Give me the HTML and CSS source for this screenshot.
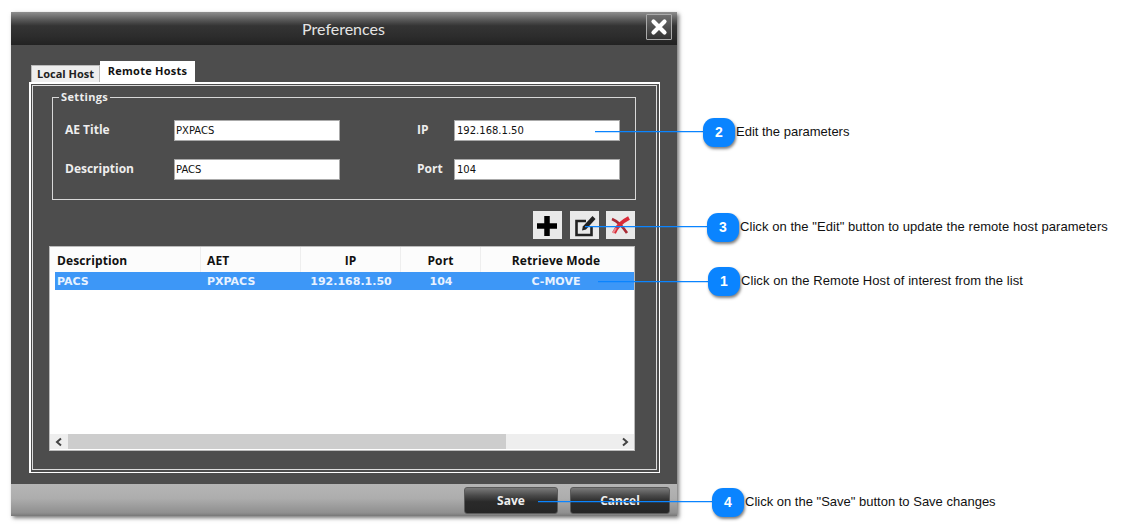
FILE: index.html
```html
<!DOCTYPE html>
<html lang="en">
<head>
<meta charset="utf-8">
<title>Preferences</title>
<link rel="stylesheet" href="styles.css">
</head>
<body>
<main class="dialog">
  <header class="titlebar">
    <h1 class="title">Preferences</h1>
    <button class="close" aria-label="Close">
      <svg width="20" height="20" viewBox="0 0 20 20"><path d="M4.5 4.5 L15.5 15.5 M15.5 4.5 L4.5 15.5" stroke="#fff" stroke-width="4.2" stroke-linecap="round"/></svg>
    </button>
  </header>
  <section class="body">
    <nav class="tabs">
      <div class="tab">Local Host</div>
      <div class="tab tab-active">Remote Hosts</div>
    </nav>
    <div class="panel">
      <fieldset class="settings">
        <legend class="legend">Settings</legend>
        <div class="form">
          <label class="lbl">AE Title</label><div class="field field-l">PXPACS</div>
          <label class="lbl lbl-r">IP</label><div class="field">192.168.1.50</div>
          <label class="lbl">Description</label><div class="field field-l">PACS</div>
          <label class="lbl lbl-r">Port</label><div class="field">104</div>
        </div>
      </fieldset>
      <div class="toolbar">
        <button class="tool" aria-label="Add">
          <svg width="25" height="25" viewBox="0 0 25 25"><path d="M12 3 V23 M2 13 H22" stroke="#000" stroke-width="5.5"/></svg>
        </button>
        <button class="tool" aria-label="Edit">
          <svg width="25" height="25" viewBox="0 0 25 25"><path d="M14 8 H4.5 V22 H19.5 V13" fill="none" stroke="#222" stroke-width="2.6"/><path d="M10 17.5 L10.8 13.5 L20.5 3 L23.5 6 L14 16.5 Z" fill="#222"/></svg>
        </button>
        <button class="tool" aria-label="Delete">
          <svg width="25" height="25" viewBox="0 0 25 25"><path d="M4 6 C9 8 15 14 19 20" fill="none" stroke="#a92a35" stroke-width="2.6"/><path d="M21 5 C15 8 9 13 6 20" fill="none" stroke="#d92a38" stroke-width="4"/><path d="M8 15 L5 20" stroke="#e88a90" stroke-width="2"/></svg>
        </button>
      </div>
      <div class="list">
        <div class="list-head row">
          <div class="c c1">Description</div><div class="c c2">AET</div><div class="c c3">IP</div><div class="c c4">Port</div><div class="c c5">Retrieve Mode</div>
        </div>
        <div class="list-sel row">
          <div class="c c1">PACS</div><div class="c c2">PXPACS</div><div class="c c3">192.168.1.50</div><div class="c c4">104</div><div class="c c5">C-MOVE</div>
        </div>
        <div class="list-fill"></div>
        <div class="hscroll">
          <div class="arrow"><svg width="10" height="10" viewBox="0 0 10 10"><path d="M7 1.5 L3 5 L7 8.5" fill="none" stroke="#444" stroke-width="2"/></svg></div>
          <div class="thumb"></div>
          <div class="track"></div>
          <div class="arrow"><svg width="10" height="10" viewBox="0 0 10 10"><path d="M3 1.5 L7 5 L3 8.5" fill="none" stroke="#444" stroke-width="2"/></svg></div>
        </div>
      </div>
    </div>
  </section>
  <footer class="footer">
    <button class="fbtn fbtn-save">Save</button>
    <button class="fbtn fbtn-cancel">Cancel</button>
  </footer>
</main>

<div class="note note2"><span class="line"></span><span class="badge">2</span><span class="ntext">Edit the parameters</span></div>
<div class="note note3"><span class="line"></span><span class="badge">3</span><span class="ntext">Click on the "Edit" button to update the remote host parameters</span></div>
<div class="note note1"><span class="line"></span><span class="badge">1</span><span class="ntext">Click on the Remote Host of interest from the list</span></div>
<div class="note note4"><span class="line"></span><span class="badge">4</span><span class="ntext">Click on the "Save" button to Save changes</span></div>
</body>
</html>
```
FILE: styles.css
```css
* { box-sizing: border-box; }
html, body { margin: 0; padding: 0; background: #fff; }
body { width: 1132px; height: 531px; overflow: hidden; position: relative; font-family: "Open Sans", sans-serif; }

.dialog {
  width: 666px; height: 504px; margin: 12px 0 0 11px;
  display: flex; flex-direction: column;
  background: #4d4d4d;
  box-shadow: 2px 2px 4px rgba(0,0,0,.55);
}
.titlebar {
  height: 33px; flex: none; position: relative;
  display: flex; align-items: center; justify-content: center;
  background: linear-gradient(#8e8e8e 0, #5c5c5c 22%, #343434 42%, #2c2c2c 75%, #222 100%);
}
.title { margin: 0 1px 0 0; font: 400 16px "Lato", sans-serif; color: #e4e4e4; }
.close {
  position: absolute; right: 5px; top: 2px; width: 26px; height: 26px; padding: 0;
  display: flex; align-items: center; justify-content: center;
  background: linear-gradient(#6e6e6e, #333); border: 1px solid #aaa; border-radius: 1px;
}

.body { flex: 1; padding: 16px 17px 11px 18px; display: flex; flex-direction: column; min-height: 0; }
.tabs { height: 21px; flex: none; display: flex; align-items: flex-end; padding-left: 2px; }
.tab {
  height: 17px; width: 69px; background: #eee; color: #222;
  font: 700 11px/15px "Open Sans", sans-serif; text-align: center;
  border: 1px solid #bbb; border-bottom: 0;
}
.tab-active { height: 21px; width: 95px; background: #fff; border: 0; color: #111; line-height: 19px; letter-spacing: .25px; }

.panel {
  flex: 1; min-height: 0; padding: 13px 21px 21px 19px;
  border: 2px solid #fff; border-right-width: 1px; border-bottom-width: 1px;
  outline: 1px solid #ddd; outline-offset: -4px;
  display: flex; flex-direction: column;
}
.settings {
  margin: 0 0 0 2px; padding: 15px 12px 0 12px; height: 103px; width: 584px; flex: none;
  border: 1px solid #d8d8d8; position: relative;
}
.legend { padding: 0 2px; font: 700 11px/11px "Open Sans", sans-serif; letter-spacing: .35px; color: #eee; position: absolute; top: -7px; left: 6px; background: #4d4d4d; }
.form { display: grid; grid-template-columns: 109px 166px 114px 166px; grid-auto-rows: 21px; row-gap: 18px; margin-top: 7px; }
.lbl { font: 700 12px/19px "Open Sans", sans-serif; color: #eee; }
.lbl-r { padding-left: 77px; }
.field {
  background: #fff; border: 1px solid #aaa; color: #111;
  font: 400 10px/19px "DejaVu Sans", sans-serif; padding-left: 2px;
}
.field-l { padding-left: 1px; }

.toolbar { display: flex; justify-content: flex-end; gap: 8px; margin: 11px 3px 0 0; height: 28px; flex: none; }
.tool {
  width: 29px; height: 28px; padding: 0; border: 0; background: #e9e9e9;
  display: flex; align-items: center; justify-content: center;
}
.tool:last-child { margin-left: -1px; }

.list { flex: 1; min-height: 0; margin: 7px 0 0 -1px; width: 586px; background: #fff; border: 1px solid #bbb; display: flex; flex-direction: column; }
.row { display: flex; flex: none; }
.list-head { height: 25px; overflow: hidden; background: #fcfcfc; font: 700 12px/27px "Open Sans", sans-serif; letter-spacing: .12px; color: #111; }
.list-sel { height: 18px; overflow: hidden; background: #3d97f7; margin-left: 5px; font: 700 11px/19px "DejaVu Sans", sans-serif; color: #e8f2ff; }
.c { text-align: center; border-right: 1px solid #eee; }
.list-sel .c { border: 0; }
.c1 { width: 151px; text-align: left; padding-left: 7px; }
.c2 { width: 100px; text-align: left; padding-left: 6px; }
.c3 { width: 100px; }
.c4 { width: 80px; }
.c5 { width: 150px; border-right: 0; }
.list-sel .c1 { width: 146px; padding-left: 2px; }
.list-fill { flex: 1; }
.hscroll { height: 15px; flex: none; display: flex; margin-bottom: 1px; }
.arrow { width: 18px; background: #eee; display: flex; align-items: center; justify-content: center; }
.thumb { width: 438px; background: #cdcdcd; }
.track { flex: 1; background: #eee; }

.footer {
  height: 32px; flex: none; display: flex; justify-content: flex-end; align-items: flex-start; gap: 12px; padding: 3px 7px 0 0;
  background: linear-gradient(#b5b5b5 0, #adadad 45%, #8f8f8f 90%, #777 100%);
}
.fbtn {
  height: 27px; padding: 0; border: 1px solid #5a5a5a; border-radius: 3px;
  background: linear-gradient(#7a7a7a 0, #4a4a4a 30%, #2a2a2a 55%, #262626 100%);
  color: #eee; font: 700 12px "Open Sans", sans-serif;
}
.fbtn-save { width: 94px; }
.fbtn-cancel { width: 100px; }

.note { position: absolute; height: 30px; display: flex; align-items: center; }
.line { position: absolute; height: 1px; background: #0a84ff; top: 14px; box-shadow: 0 1px 0 rgba(10,132,255,.25); }
.badge {
  width: 32px; height: 29px; flex: none; border-radius: 11px; position: relative;
  background: #0a84ff; color: #fff; box-shadow: 1px 2px 3px rgba(0,0,0,.5);
  font: 700 14px/29px "Liberation Sans", sans-serif; text-align: center;
}
.ntext { font: 400 13px "Liberation Sans", sans-serif; color: #111; margin: 0 0 2px 1px; white-space: nowrap; }

.note2 { left: 703px; top: 117px; }
.note2 .line { left: -108px; width: 108px; }
.note3 { left: 707px; top: 212px; }
.note3 .line { left: -122px; width: 122px; }
.note3 .ntext { letter-spacing: .06px; }
.note1 { left: 708px; top: 266px; }
.note1 .line { left: -110px; width: 110px; top: 15px; }
.note1 .ntext { letter-spacing: .06px; }
.note4 { left: 712px; top: 487px; }
.note4 .line { left: -174px; width: 174px; }
```
